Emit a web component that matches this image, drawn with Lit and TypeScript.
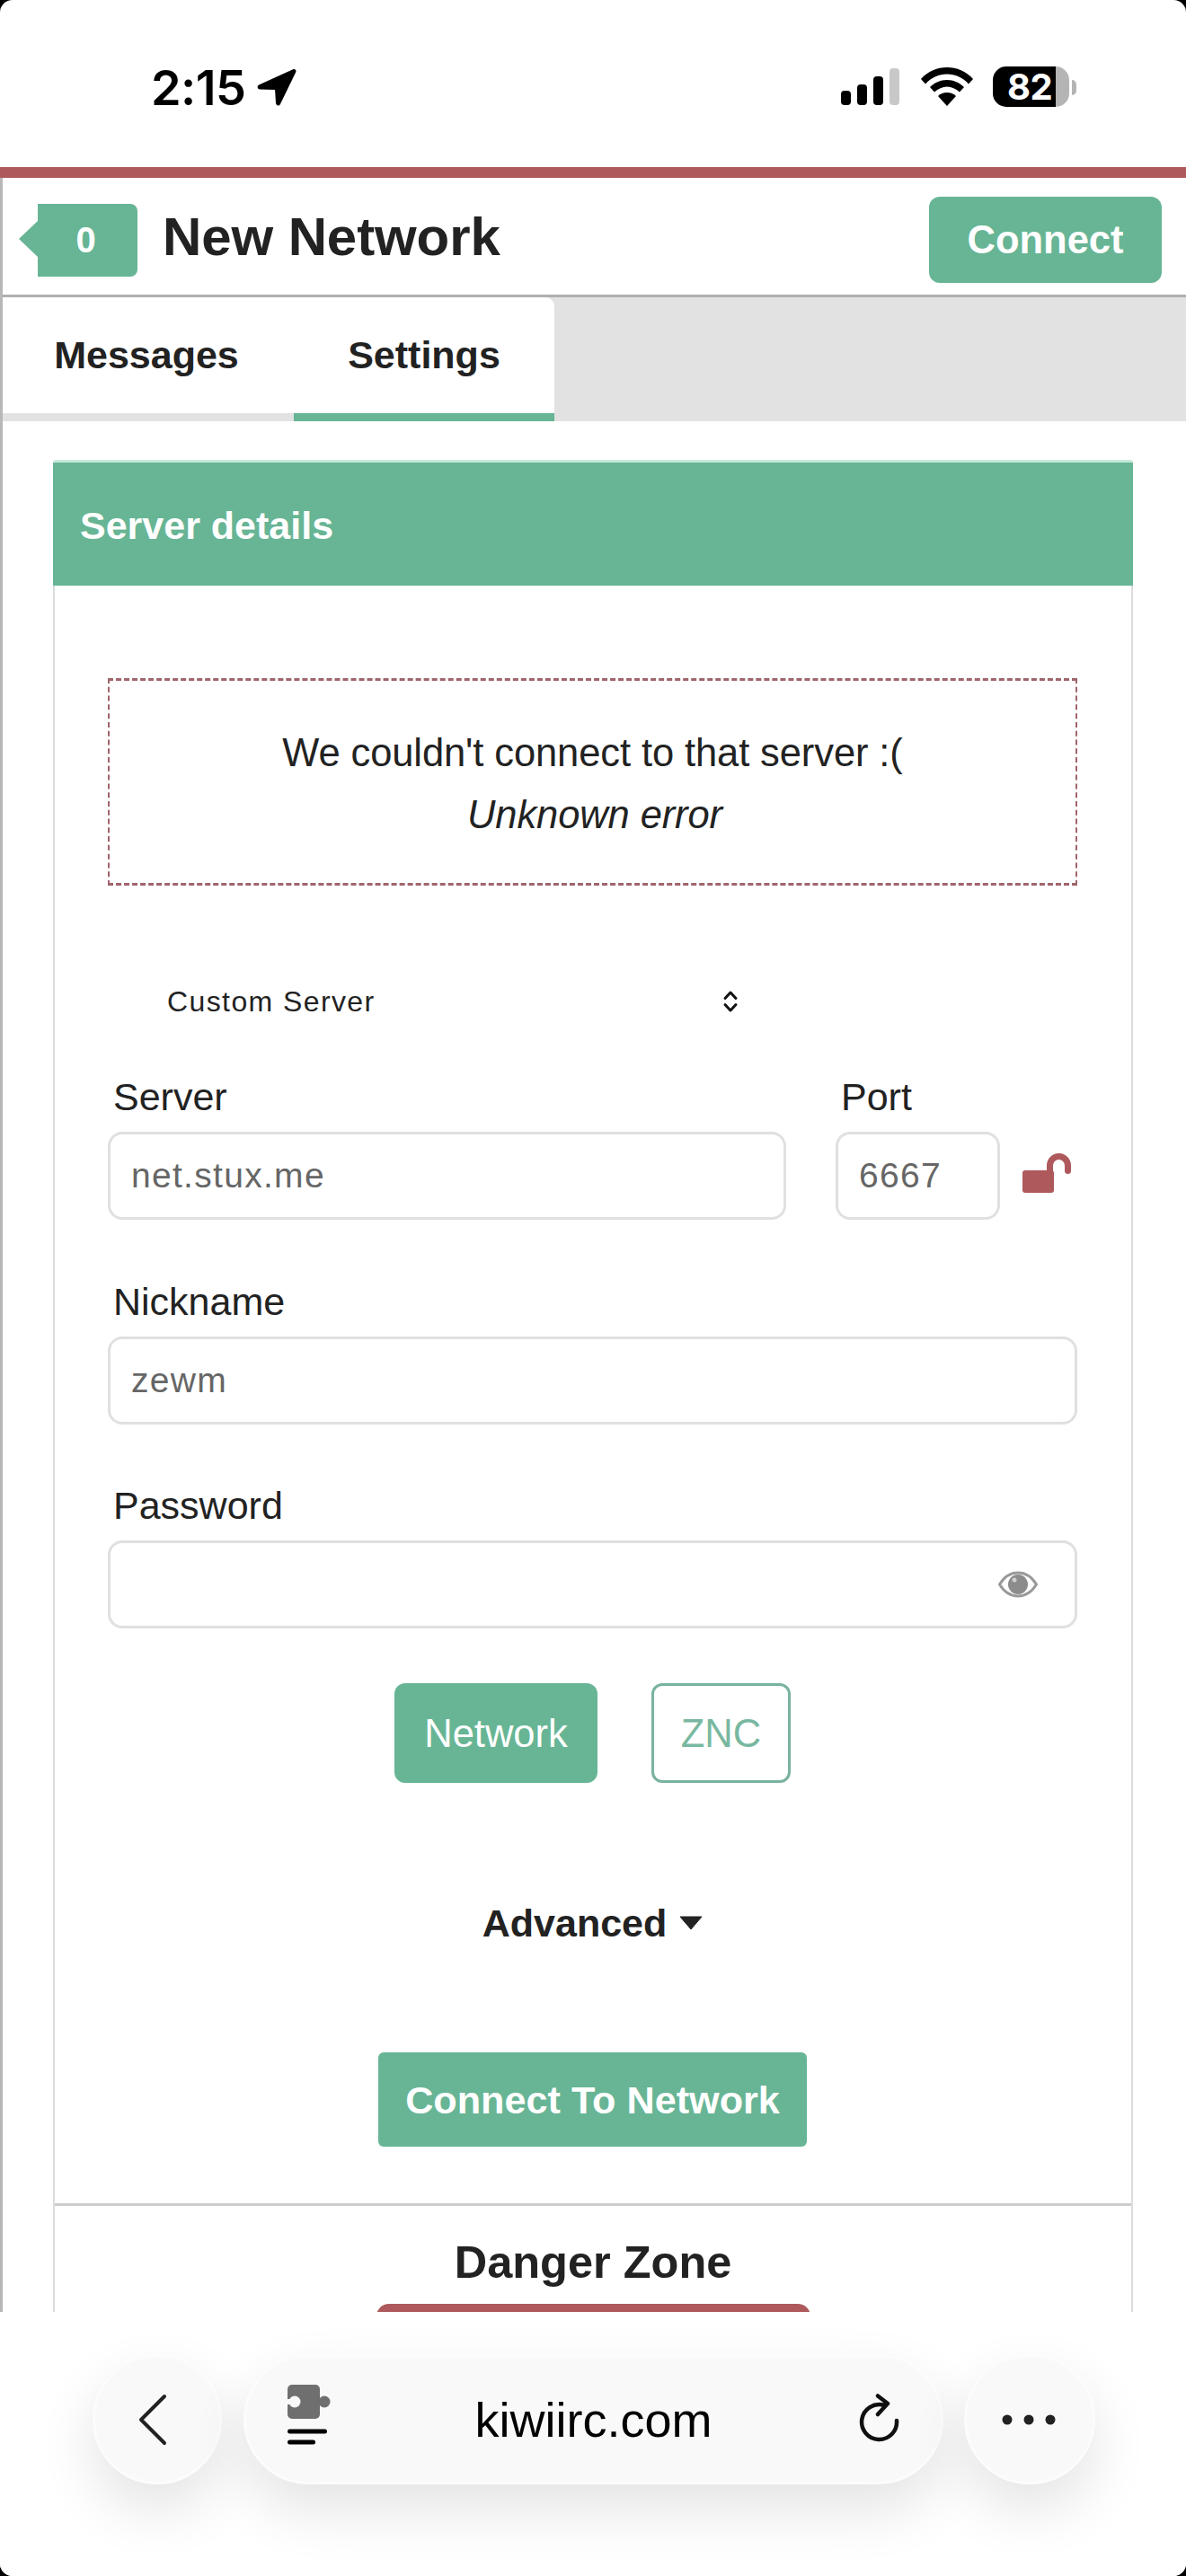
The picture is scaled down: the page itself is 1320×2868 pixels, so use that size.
import { LitElement, html, css } from 'lit';
import { customElement } from 'lit/decorators.js';

@customElement('app-root')
export class AppRoot extends LitElement {
  static styles = css`
    :host {
      display: block;
      position: relative;
      width: 1320px;
      height: 2868px;
      overflow: hidden;
      background: #000;
      font-family: 'Liberation Sans', Arial, sans-serif;
      color: #222;
    }
    .screen {
      position: relative;
      height: 2868px;
      overflow: hidden;
      background: #fff;
      border-radius: 14px;
    }

    /* status bar */
    .status {
      height: 186px;
      box-sizing: border-box;
      display: flex;
      align-items: flex-start;
      justify-content: space-between;
      padding: 74px 130px 0 168px;
    }
    .time {
      display: flex;
      align-items: center;
      gap: 13px;
      height: 46px;
      font-family: Inter, sans-serif;
      font-size: 54px;
      font-weight: 600;
      letter-spacing: -0.6px;
      color: #000;
    }
    .status-icons {
      display: flex;
      align-items: flex-start;
      gap: 22.500px;
    }
    .battery {
      position: relative;
      display: flex;
      align-items: center;
      justify-content: flex-start;
      width: 85px;
      height: 45px;
      box-sizing: border-box;
      padding-left: 16px;
      border-radius: 15px;
      background: linear-gradient(90deg, #000 0 70px, #b4b4b4 70px);
      color: #fff;
      font-family: Inter, sans-serif;
      font-size: 40px;
      font-weight: 700;
      letter-spacing: -0.5px;
    }
    .battery::after {
      content: '';
      position: absolute;
      left: 88px;
      top: 15px;
      width: 5px;
      height: 17px;
      border-radius: 0 5px 5px 0;
      background: #b4b4b4;
    }

    /* page under the status bar */
    .redbar {
      height: 12px;
      background: #ae595c;
    }
    .page {
      border-left: 3px solid #b8b8b8;
      height: 2670px;
    }
    .topbar {
      height: 130px;
      border-bottom: 3px solid #b0b0b0;
      display: flex;
      align-items: center;
      padding: 0 27px 0 18px;
      box-sizing: content-box;
    }
    .badge {
      position: relative;
      width: 111px;
      height: 81px;
      margin: 8px 0 0 21px;
      border-radius: 0 8px 8px 0;
      background: #67b595;
      color: #fff;
      font-size: 40px;
      font-weight: 700;
      display: flex;
      align-items: center;
      justify-content: center;
      padding-right: 4px;
      box-sizing: border-box;
    }
    .badge::before {
      content: '';
      position: absolute;
      left: -21px;
      top: 19px;
      border-style: solid;
      border-width: 20px 21px 20px 0;
      border-color: transparent #67b595 transparent transparent;
    }
    .title {
      flex: 1;
      margin: 0 0 0 28px;
      font-size: 60px;
      font-weight: 700;
      letter-spacing: -0.1px;
      white-space: nowrap;
    }
    .connect {
      width: 259px;
      height: 96px;
      margin-top: 8px;
      border-radius: 12px;
      background: #67b595;
      color: #fff;
      font-size: 43.500px;
      font-weight: 700;
      display: flex;
      align-items: center;
      justify-content: center;
    }

    .tabs {
      height: 138px;
      display: flex;
      background: #e2e2e2;
    }
    .tab-group {
      display: flex;
      width: 614px;
      background: #fff;
      border-top-right-radius: 10px;
    }
    .tab {
      box-sizing: border-box;
      display: flex;
      align-items: center;
      justify-content: center;
      height: 138px;
      font-size: 43px;
      font-weight: 700;
      border-bottom: 9px solid #e2e2e2;
    }
    .tab.messages {
      width: 324px;
      padding-right: 4px;
    }
    .tab.settings {
      width: 290px;
      border-bottom-color: #67b595;
    }

    .card {
      margin: 43px 59px 0 56px;
      border: solid #dcdcdc;
      border-width: 0 2px;
      border-top: 3px solid #c5e8d8;
      border-radius: 3px 3px 0 0;
    }
    .card-head {
      box-sizing: border-box;
      height: 137px;
      display: flex;
      align-items: center;
      padding: 4px 0 0 30px;
      margin: 0 -2px;
      background: #67b595;
      color: #fff;
      font-size: 43px;
      font-weight: 700;
    }
    .card-body {
      padding: 103px 60px 0 59px;
    }
    .error {
      box-sizing: border-box;
      height: 231px;
      padding-top: 4px;
      border: solid #a0646c;
      border-width: 3px 2px;
      border-style: dashed;
      display: flex;
      flex-direction: column;
      align-items: center;
      justify-content: center;
      gap: 17px;
      font-size: 43.500px;
      line-height: 52px;
      letter-spacing: -0.1px;
    }
    .error em {
      font-style: italic;
      margin-left: 5px;
    }
    .select {
      display: flex;
      align-items: center;
      height: 34px;
      margin: 112px 0 0 66px;
      font-size: 32px;
      letter-spacing: 1.400px;
      color: #222;
    }
    .select span {
      width: 617px;
    }
    .row {
      display: flex;
      gap: 55px;
      margin-top: 63px;
    }
    .field {
      display: flex;
      flex-direction: column;
      flex: 1;
      min-width: 0;
    }
    .label {
      height: 52px;
      margin-left: 6px;
      font-size: 43px;
      line-height: 52px;
    }
    .input {
      box-sizing: border-box;
      height: 98px;
      margin-top: 13px;
      padding: 0 23px;
      border: 3px solid #e0e0e0;
      border-radius: 16px;
      display: flex;
      align-items: center;
      justify-content: space-between;
      color: #666;
      font-size: 39px;
      letter-spacing: 1.300px;
    }
    .input.eye {
      padding-right: 41px;
    }
    .port {
      flex: none;
      width: 183px;
    }
    .port-wrap {
      display: flex;
      width: 269px;
      flex: none;
      position: relative;
    }
    .lock {
      position: absolute;
      left: 208px;
      top: 89px;
    }
    .row.stacked {
      margin-top: 64.500px;
    }
    .modes {
      display: flex;
      justify-content: center;
      gap: 60px;
      margin: 61px 0 0 0;
    }
    .mode {
      box-sizing: border-box;
      height: 111px;
      padding-top: 2px;
      display: flex;
      align-items: center;
      justify-content: center;
      border-radius: 12px;
      font-size: 43.500px;
    }
    .mode.on {
      width: 226px;
      background: #67b595;
      color: #fff;
    }
    .mode.off {
      width: 155px;
      border: 3px solid #79b39d;
      color: #79b8a0;
    }
    .advanced {
      display: flex;
      justify-content: center;
      align-items: center;
      gap: 14px;
      margin-top: 131px;
      height: 50px;
      font-size: 43px;
      font-weight: 700;
    }
    .submit {
      box-sizing: border-box;
      width: 477px;
      height: 105px;
      padding-top: 2px;
      margin: 119px auto 0;
      border-radius: 6px;
      background: #67b595;
      color: #fff;
      font-size: 43.200px;
      font-weight: 700;
      display: flex;
      align-items: center;
      justify-content: center;
    }
    .danger {
      margin-top: 63px;
      border-top: 3px solid #ccc;
      display: flex;
      flex-direction: column;
      align-items: center;
    }
    .danger h3 {
      margin: 33px 0 0;
      font-size: 50.500px;
      line-height: 60px;
      font-weight: 700;
    }
    .danger-btn {
      width: 483px;
      height: 120px;
      margin-top: 16px;
      border-radius: 14px;
      background: #ae595c;
    }

    /* browser toolbar */
    .toolbar {
      position: absolute;
      left: 0;
      right: 0;
      top: 2574px;
      height: 294px;
      background: #fff;
    }
    .round {
      position: absolute;
      top: 47px;
      height: 145px;
      box-sizing: border-box;
      background: #f9f9f9;
      border: 3px solid #fcfcfc;
      border-radius: 73px;
      box-shadow: 0 28px 64px rgba(0, 0, 0, 0.11);
      display: flex;
      align-items: center;
      justify-content: center;
    }
    .back {
      left: 103px;
      width: 144px;
    }
    .back svg {
      margin-right: 10px;
    }
    .url {
      left: 271px;
      width: 779px;
      font-size: 54px;
      color: #000;
    }
    .more {
      left: 1073px;
      width: 146px;
    }
    .more svg {
      margin-right: 2px;
    }
    .url svg {
      position: absolute;
    }
    .ext {
      left: 46px;
      top: 31px;
    }
    .reload {
      left: 681px;
      top: 41px;
    }
  `;

  render() {
    return html`
      <div class="screen">
        <div class="status">
          <div class="time">
            <span>2:15</span>
            <svg width="44" height="42" viewBox="0 0 44 42">
              <path d="M41 2 2.500 19.500c-1.500.8-1 3 .7 3L21 23l1 16c.2 1.700 2.300 2 3 .5L42.500 3.500c.3-.8-.7-1.800-1.500-1.500z" fill="#000" stroke="#000" stroke-width="2" stroke-linejoin="round" />
            </svg>
          </div>
          <div class="status-icons">
            <svg width="66" height="43" viewBox="0 0 66 43" style="margin-top:2px">
              <rect x="0" y="25" width="11" height="16" rx="4" fill="#000" />
              <rect x="18" y="18" width="11" height="23" rx="4" fill="#000" />
              <rect x="36" y="9" width="11" height="32" rx="4" fill="#000" />
              <rect x="54" y="0" width="11" height="41" rx="4" fill="#c8c8c8" />
            </svg>
            <svg width="58" height="43" viewBox="0 0 58 43" style="margin-top:1px">
              <path d="M29 0C18 0 8 4 0 13l5 5.500C12 11 20 7.500 29 7.500s17 3.500 24 11l5-5.500C50 4 40 0 29 0z" fill="#000" />
              <path d="M29 14c-7.500 0-14 3-19 8l5 5.500c4-3.500 9-6 14-6s10 2.500 14 6l5-5.500c-5-5-11.500-8-19-8z" fill="#000" />
              <path d="M29 28c-4 0-7.500 1.500-10 4l10 11 10-11c-2.500-2.500-6-4-10-4z" fill="#000" />
            </svg>
            <div class="battery">82</div>
          </div>
        </div>
        <div class="redbar"></div>
        <div class="page">
          <div class="topbar">
            <div class="badge">0</div>
            <h1 class="title">New Network</h1>
            <div class="connect">Connect</div>
          </div>
          <div class="tabs">
            <div class="tab-group">
              <div class="tab messages">Messages</div>
              <div class="tab settings">Settings</div>
            </div>
          </div>
          <div class="card">
            <div class="card-head">Server details</div>
            <div class="card-body">
              <div class="error">
                <div>We couldn't connect to that server :(</div>
                <em>Unknown error</em>
              </div>
              <div class="select">
                <span>Custom Server</span>
                <svg width="20" height="26" viewBox="0 0 20 26" fill="none" stroke="#111" stroke-width="3" stroke-linecap="round" stroke-linejoin="round">
                  <path d="M4 9.500 10 3l6 6.500M4 16.500 10 23l6-6.500" />
                </svg>
              </div>
              <div class="row">
                <div class="field">
                  <div class="label">Server</div>
                  <div class="input">net.stux.me</div>
                </div>
                <div class="port-wrap">
                  <div class="field port">
                    <div class="label">Port</div>
                    <div class="input">6667</div>
                  </div>
                  <svg class="lock" width="54" height="44" viewBox="0 0 54 44">
                    <rect x="0" y="19" width="35" height="25" rx="3" fill="#ae595c" />
                    <path d="M30.500 20V13.500a10 10 0 0 1 20 0V19.500" fill="none" stroke="#ae595c" stroke-width="7" stroke-linecap="round" />
                  </svg>
                </div>
              </div>
              <div class="row stacked">
                <div class="field">
                  <div class="label">Nickname</div>
                  <div class="input">zewm</div>
                </div>
              </div>
              <div class="row stacked">
                <div class="field">
                  <div class="label">Password</div>
                  <div class="input eye">
                    <span></span>
                    <svg width="44" height="30" viewBox="0 0 44 30">
                      <path d="M1.500 15C7 6 14 2 22 2s15 4 20.500 13C37 24 30 28 22 28S7 24 1.500 15z" fill="none" stroke="#999" stroke-width="3" />
                      <circle cx="22" cy="15" r="11" fill="#8c8c8c" />
                      <circle cx="18" cy="10" r="2.500" fill="#cfcfcf" />
                    </svg>
                  </div>
                </div>
              </div>
              <div class="modes">
                <div class="mode on">Network</div>
                <div class="mode off">ZNC</div>
              </div>
              <div class="advanced">
                <span>Advanced</span>
                <svg width="26" height="16" viewBox="0 0 26 16"><path d="M1 1h24L13 15z" fill="#222" stroke="#222" stroke-linejoin="round" /></svg>
              </div>
              <div class="submit">Connect To Network</div>
            </div>
            <div class="danger">
              <h3>Danger Zone</h3>
              <div class="danger-btn"></div>
            </div>
          </div>
        </div>
        <div class="toolbar">
          <div class="round back">
            <svg width="36" height="58" viewBox="0 0 36 58" fill="none" stroke="#222" stroke-width="4" stroke-linecap="round" stroke-linejoin="round">
              <path d="M31 3 5 29l26 26" />
            </svg>
          </div>
          <div class="round url">
            <svg class="ext" width="50" height="70" viewBox="0 0 50 70">
              <rect x="0" y="0" width="36" height="38" rx="5" fill="#6f6f6f" />
              <circle cx="41" cy="19" r="6.500" fill="#6f6f6f" />
              <circle cx="8" cy="19" r="6.500" fill="#f9f9f9" />
              <rect x="0" y="16" width="6" height="6" fill="#f9f9f9" />
              <rect x="0" y="49.500" width="44" height="5" rx="2.500" fill="#000" />
              <rect x="0" y="61.500" width="31" height="5" rx="2.500" fill="#000" />
            </svg>
            kiwiirc.com
            <svg class="reload" width="50" height="58" viewBox="0 0 50 58" fill="none" stroke="#111" stroke-width="4.500" stroke-linecap="round" stroke-linejoin="round">
              <path d="M43 30A19.500 19.500 0 1 1 29 12.800L33 11M22 2.500 33 11 22 23" />
            </svg>
          </div>
          <div class="round more">
            <svg width="62" height="14" viewBox="0 0 62 14">
              <circle cx="7" cy="7" r="5.500" fill="#222" />
              <circle cx="31" cy="7" r="5.500" fill="#222" />
              <circle cx="55" cy="7" r="5.500" fill="#222" />
            </svg>
          </div>
        </div>
      </div>
    `;
  }
}
